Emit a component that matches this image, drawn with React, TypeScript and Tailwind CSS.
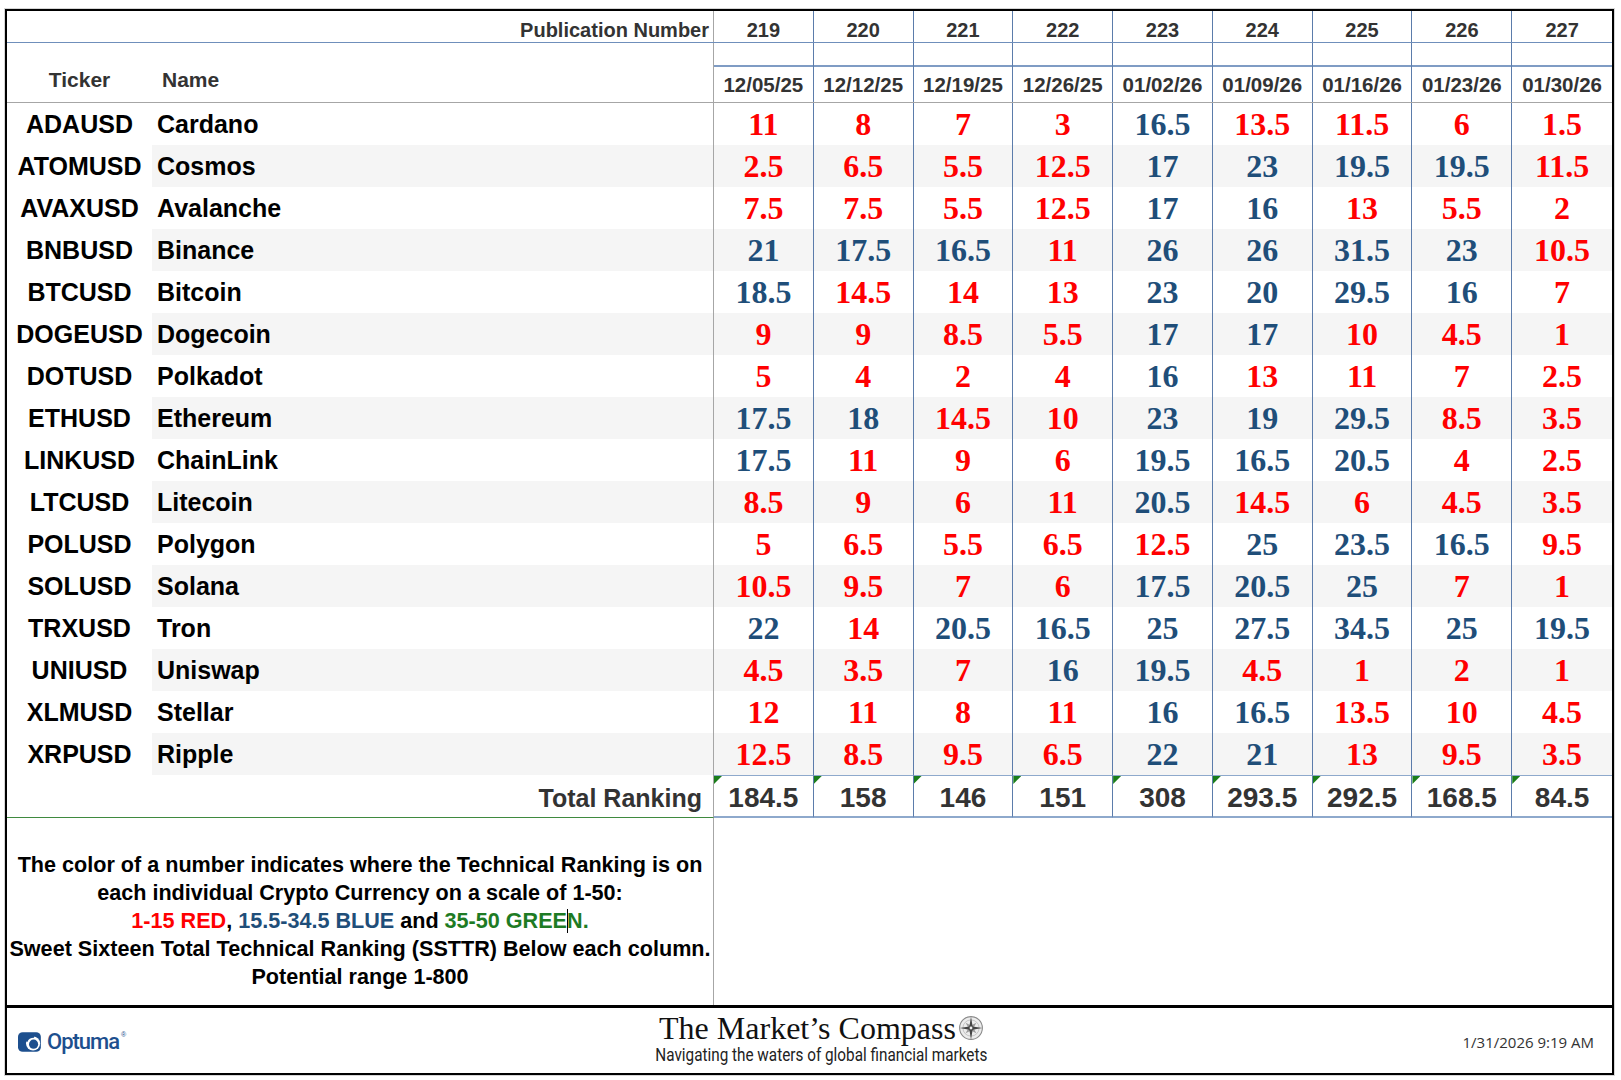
import React from "react";

const pubs = [219, 220, 221, 222, 223, 224, 225, 226, 227];
const dates = ["12/05/25", "12/12/25", "12/19/25", "12/26/25", "01/02/26", "01/09/26", "01/16/26", "01/23/26", "01/30/26"];

const rows: [string, string, number[]][] = [
  ["ADAUSD", "Cardano", [11, 8, 7, 3, 16.5, 13.5, 11.5, 6, 1.5]],
  ["ATOMUSD", "Cosmos", [2.5, 6.5, 5.5, 12.5, 17, 23, 19.5, 19.5, 11.5]],
  ["AVAXUSD", "Avalanche", [7.5, 7.5, 5.5, 12.5, 17, 16, 13, 5.5, 2]],
  ["BNBUSD", "Binance", [21, 17.5, 16.5, 11, 26, 26, 31.5, 23, 10.5]],
  ["BTCUSD", "Bitcoin", [18.5, 14.5, 14, 13, 23, 20, 29.5, 16, 7]],
  ["DOGEUSD", "Dogecoin", [9, 9, 8.5, 5.5, 17, 17, 10, 4.5, 1]],
  ["DOTUSD", "Polkadot", [5, 4, 2, 4, 16, 13, 11, 7, 2.5]],
  ["ETHUSD", "Ethereum", [17.5, 18, 14.5, 10, 23, 19, 29.5, 8.5, 3.5]],
  ["LINKUSD", "ChainLink", [17.5, 11, 9, 6, 19.5, 16.5, 20.5, 4, 2.5]],
  ["LTCUSD", "Litecoin", [8.5, 9, 6, 11, 20.5, 14.5, 6, 4.5, 3.5]],
  ["POLUSD", "Polygon", [5, 6.5, 5.5, 6.5, 12.5, 25, 23.5, 16.5, 9.5]],
  ["SOLUSD", "Solana", [10.5, 9.5, 7, 6, 17.5, 20.5, 25, 7, 1]],
  ["TRXUSD", "Tron", [22, 14, 20.5, 16.5, 25, 27.5, 34.5, 25, 19.5]],
  ["UNIUSD", "Uniswap", [4.5, 3.5, 7, 16, 19.5, 4.5, 1, 2, 1]],
  ["XLMUSD", "Stellar", [12, 11, 8, 11, 16, 16.5, 13.5, 10, 4.5]],
  ["XRPUSD", "Ripple", [12.5, 8.5, 9.5, 6.5, 22, 21, 13, 9.5, 3.5]],
];

const totals = ["184.5", "158", "146", "151", "308", "293.5", "292.5", "168.5", "84.5"];

const grid = "grid grid-cols-[145px_562px_repeat(9,minmax(0,1fr))]";
const colLine = "border-r border-[#5b7cab]";
const grayLine = "border-r border-[#a6a6a6]";

// 1-15 red, 15.5-34.5 blue, 35-50 green
function rankColor(v: number) {
  if (v <= 15) return "text-[#ff0000]";
  if (v < 35) return "text-[#1f4e79]";
  return "text-[#1e7b24]";
}

function CompassIcon() {
  return (
    <svg width="26" height="26" viewBox="0 0 24 24">
      <circle cx="12" cy="12" r="10.5" fill="#ececec" stroke="#8a8a8a" strokeWidth="1" />
      <circle cx="12" cy="12" r="7.5" fill="none" stroke="#b0b0b0" strokeWidth="0.6" />
      <polygon points="12,5 13.6,10.4 19,12 13.6,13.6 12,19 10.4,13.6 5,12 10.4,10.4" fill="#9a9a9a" transform="rotate(45 12 12)" />
      <polygon points="12,1.5 13.5,10.5 22.5,12 13.5,13.5 12,22.5 10.5,13.5 1.5,12 10.5,10.5" fill="#444" />
      <circle cx="12" cy="12" r="1.3" fill="#eee" />
    </svg>
  );
}

function OptumaLogo() {
  return (
    <div className="flex items-center gap-[2px] text-[#1d4f8e]">
      <svg width="27" height="22" viewBox="0 0 26 21">
        <rect x="0" y="1" width="22" height="19" rx="4.5" fill="#1d4f8e" />
        <circle cx="14.5" cy="12" r="6.8" fill="#ffffff" />
        <circle cx="15" cy="12.6" r="4.4" fill="#1d4f8e" />
        <path d="M8 10 Q9.8 5.2 15.5 5.3" stroke="#1d4f8e" strokeWidth="2.2" fill="none" />
      </svg>
      <span className="font-['Roboto',sans-serif] text-[22px] font-medium leading-none tracking-[-1px]">Optuma</span>
      <span className="self-start text-[7px] leading-none">®</span>
    </div>
  );
}

export default function App() {
  return (
    <div className="min-h-screen bg-white pl-[4px] pt-[8px] font-['Liberation_Sans',Arial,sans-serif]">
      <div className="w-[1611px] border border-[#d6d6d6]">
        <div className="border-2 border-black">
          {/* publication numbers */}
          <div className={`${grid} h-[32px] border-b border-[#6f8fbb]`}>
            <div className={`col-span-2 flex items-end justify-end pb-[2px] pr-[4px] text-[20px] font-bold leading-none text-[#333] ${grayLine}`}>
              Publication Number
            </div>
            {pubs.map((p, i) => (
              <div key={p} className={`flex items-end justify-center pb-[2px] text-[20px] font-bold leading-none text-[#333] ${i < 8 ? colLine : ""}`}>
                {p}
              </div>
            ))}
          </div>

          {/* ticker / name / dates */}
          <div className={`${grid} border-b border-[#a6a6a6]`}>
            <div className="flex items-end justify-center pb-[12px] text-[21px] font-bold leading-none text-[#333]">Ticker</div>
            <div className={`flex items-end pb-[12px] pl-[10px] text-[21px] font-bold leading-none text-[#333] ${grayLine}`}>Name</div>
            {dates.map((d, i) => (
              <div key={d} className={`flex flex-col ${i < 8 ? colLine : ""}`}>
                <div className="h-[24px] border-b-2 border-[#7f9cc4]" />
                <div className="flex h-[35px] items-end justify-center pb-[7px] text-[20.5px] font-bold leading-none text-[#333]">{d}</div>
              </div>
            ))}
          </div>

          {/* rankings */}
          {rows.map(([ticker, name, vals], r) => (
            <div key={ticker} className={`${grid} h-[42px] ${r % 2 === 1 ? "bg-[#f5f5f5]" : "bg-white"}`}>
              <div className="flex items-center justify-center bg-white text-[25px] font-bold leading-none text-black">{ticker}</div>
              <div className={`flex items-center pl-[5px] text-[25px] font-bold leading-none text-black ${grayLine}`}>{name}</div>
              {vals.map((v, i) => (
                <div
                  key={i}
                  className={`flex items-center justify-center font-['Liberation_Serif','Times_New_Roman',serif] text-[32px] font-bold leading-none ${rankColor(v)} ${i < 8 ? colLine : ""}`}
                >
                  {v}
                </div>
              ))}
            </div>
          ))}

          {/* totals */}
          <div className={`${grid} h-[43px]`}>
            <div className={`col-span-2 flex items-center justify-end border-b border-b-[#3f8a3f] pr-[11px] pt-[4px] text-[25px] font-bold leading-none text-[#333] ${grayLine}`}>
              Total Ranking
            </div>
            {totals.map((t, i) => (
              <div
                key={i}
                className={`relative flex items-center justify-center border-t border-b-2 border-t-[#8ea9cc] border-b-[#8ea9cc] pt-[4px] text-[28px] font-bold leading-none text-[#333] ${i < 8 ? colLine : ""}`}
              >
                <span className="absolute left-0 top-0 h-[8px] w-[8px] bg-[#1a7d1a] [clip-path:polygon(0_0,100%_0,0_100%)]" />
                {t}
              </div>
            ))}
          </div>

          {/* notes */}
          <div className={`${grid} h-[187px]`}>
            <div className={`col-span-2 pt-[33px] text-center text-[21.6px] font-bold leading-[28px] text-black ${grayLine}`}>
              <p>The color of a number indicates where the Technical Ranking is on</p>
              <p>each individual Crypto Currency on a scale of 1-50:</p>
              <p>
                <span className="text-[#ff0000]">1-15 RED</span>, <span className="text-[#1f4e79]">15.5-34.5 BLUE</span> and{" "}
                <span className="text-[#1e7b24]">
                  35-50 GREE
                  <span className="-mr-px inline-block h-[24px] w-px bg-black align-[-5px]" />
                  N.
                </span>
              </p>
              <p className="whitespace-nowrap">Sweet Sixteen Total Technical Ranking (SSTTR) Below each column.</p>
              <p>Potential range 1-800</p>
            </div>
            <div className="col-span-9" />
          </div>

          {/* footer */}
          <div className="grid h-[68px] grid-cols-[1fr_auto_1fr] border-t-[3px] border-black">
            <div className="flex items-center pl-[11px] pt-[3px]">
              <OptumaLogo />
            </div>
            <div className="ml-[24px] flex flex-col items-center pt-[4px]">
              <div className="flex h-[32px] items-center gap-[2px]">
                <span className="font-['Liberation_Serif','Times_New_Roman',serif] text-[32px] leading-[32px] text-[#111]">
                  The Market’s Compass
                </span>
                <CompassIcon />
              </div>
              <div className="origin-center scale-x-[0.85] whitespace-nowrap font-['Roboto',sans-serif] text-[18px] leading-[22px] text-[#222]">
                Navigating the waters of global financial markets
              </div>
            </div>
            <div className="flex items-center justify-end pr-[18px] pt-[3px] font-['Open_Sans',sans-serif] text-[15px] text-[#333]">
              1/31/2026 9:19 AM
            </div>
          </div>
        </div>
      </div>
    </div>
  );
}
